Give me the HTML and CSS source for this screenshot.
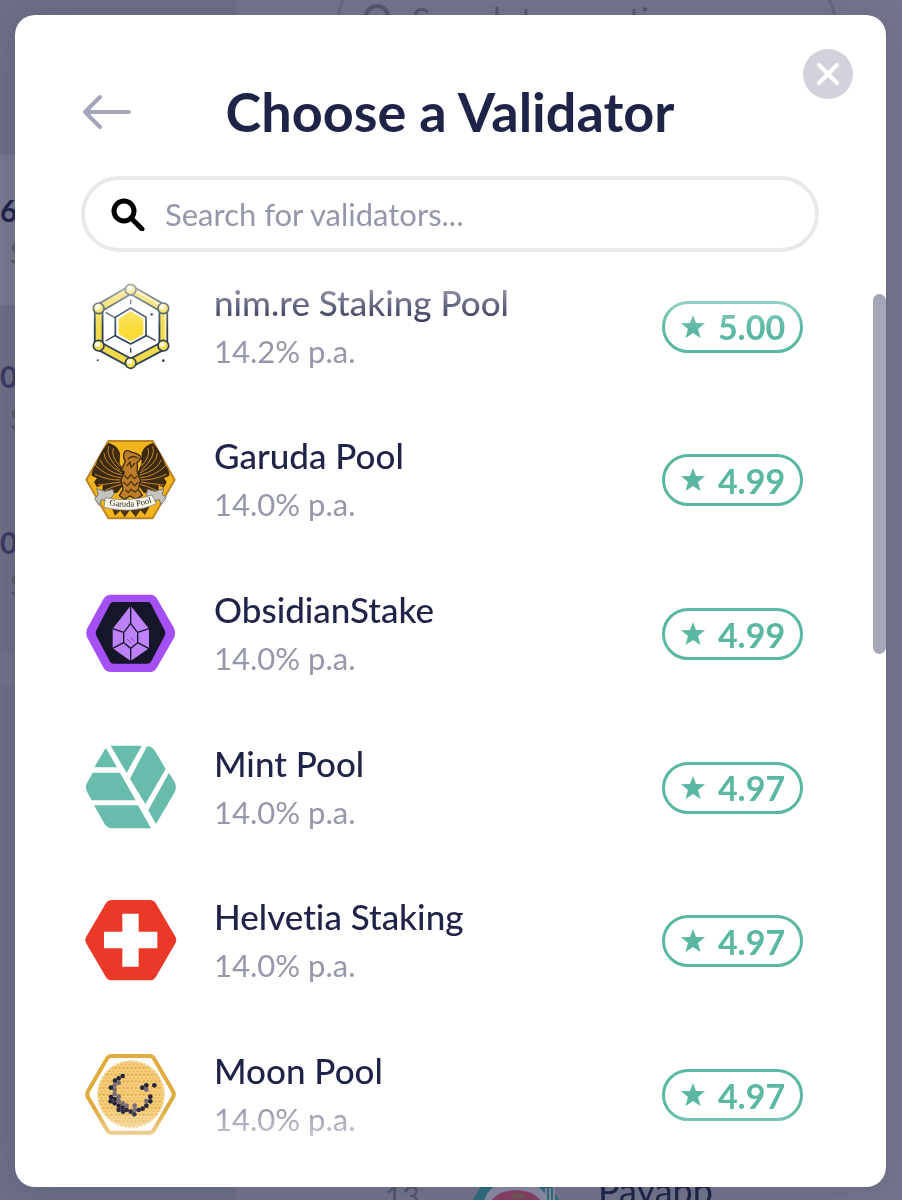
FILE: index.html
```html
<!DOCTYPE html>
<html lang="en">
<head>
    <meta charset="UTF-8">
    <meta name="viewport" content="width=device-width, initial-scale=1.0">
    <title>Choose a Validator</title>
    <link rel="stylesheet" href="styles.css">
</head>
<body>

    <!-- wallet page behind the modal -->
    <div class="page" aria-hidden="true">
        <div class="sidebar">
            <div class="account-top"></div>
            <div class="account active"><b>6</b><span>S</span></div>
            <div class="account"><b>0</b><span>S</span></div>
            <div class="account"><b>0</b><span>S</span></div>
            <div class="account-add"></div>
        </div>
        <div class="transactions">
            <div class="page-search">
                <svg width="30" height="30" viewBox="0 0 30 30"><circle cx="13" cy="13" r="11" fill="none" stroke="currentColor" stroke-width="4"/><path d="M21 21l7 7" stroke="currentColor" stroke-width="4"/></svg>
                <span>Search transactions</span>
            </div>
            <div class="transaction">
                <span class="date">13</span>
                <svg width="108" height="80" viewBox="0 0 108 80">
                    <path d="M24 0h60l24 40-24 40H24L0 40z" fill="#2f6b7d"/>
                    <ellipse cx="54" cy="26" rx="32" ry="24" fill="#8b8ca2"/>
                    <ellipse cx="54" cy="32" rx="28" ry="20" fill="#873f64"/>
                    <path d="M50 20q6-6 12 0" stroke="#6b5a50" stroke-width="4" fill="none"/>
                    <path d="M88 10v14M92 10v14M84 10v14" stroke="#8b8ca2" stroke-width="2"/>
                </svg>
                <span class="payee">Payapp</span>
            </div>
        </div>
    </div>

    <div class="overlay">
        <div class="modal" role="dialog" aria-labelledby="modal-title">
            <button class="close-button" aria-label="Close">
                <svg width="50" height="50" viewBox="0 0 50 50"><circle cx="25" cy="25" r="25" fill="#d2d2dc"/><path d="M16 16l18 18M34 16L16 34" stroke="#fff" stroke-width="4" stroke-linecap="round"/></svg>
            </button>

            <header class="modal-header">
                <button class="back-button" aria-label="Back">
                    <svg width="50" height="36" viewBox="0 0 50 36"><path d="M48 18H4M19 3L4 18l15 15" fill="none" stroke="#a5a6b8" stroke-width="4" stroke-linecap="round" stroke-linejoin="round"/></svg>
                </button>
                <h1 id="modal-title">Choose a Validator</h1>
            </header>

            <label class="search">
                <svg width="34" height="34" viewBox="0 0 34 34"><circle cx="13" cy="14" r="10" fill="none" stroke="#000" stroke-width="5"/><path d="M20 21l11 11" stroke="#000" stroke-width="5" stroke-linecap="round"/></svg>
                <input type="text" placeholder="Search for validators..." aria-label="Search for validators">
            </label>

            <ul class="validators">
                <li>
                    <svg class="icon" viewBox="46 39 270 270">
                        <g stroke="#2e4057" stroke-width="5" stroke-linejoin="round" fill="none">
                            <path d="M183 62L281 118V230L183 282L87 230V118z" stroke-width="29"/>
                            <path d="M183 62L281 118V230L183 282L87 230V118z" stroke="#f0d94a" stroke-width="18"/>
                            <path d="M183 56L287 116V234" stroke="#fff4ad" stroke-width="5"/>
                            <path d="M183 117L229 145V200L183 225L137 200V145z"/>
                            <path d="M183 127L221 149V196L183 217L147 196V149z" fill="#f9dc37" stroke="none"/>
                            <path d="M108 130L137 147M108 216L137 199M258 215L229 199M183 92v14M183 237v14" stroke-width="4"/>
                            <g fill="#f5dc48">
                                <circle cx="183" cy="62" r="16"/><circle cx="281" cy="118" r="16"/>
                                <circle cx="281" cy="230" r="16"/><circle cx="183" cy="282" r="16"/>
                                <circle cx="87" cy="230" r="16"/><circle cx="87" cy="118" r="16"/>
                            </g>
                        </g>
                        <g fill="#fffbe0">
                            <circle cx="180" cy="59" r="8"/><circle cx="278" cy="114" r="8"/><circle cx="278" cy="226" r="8"/>
                            <circle cx="180" cy="278" r="8"/><circle cx="84" cy="226" r="8"/><circle cx="84" cy="114" r="8"/>
                        </g>
                        <g fill="#2e4057"><circle cx="246" cy="136" r="4"/><circle cx="84" cy="274" r="3"/><circle cx="281" cy="275" r="4"/></g>
                    </svg>
                    <div class="info">
                        <h2>nim.re Staking Pool</h2>
                        <p>14.2% p.a.</p>
                    </div>
                    <div class="score"><svg width="26" height="26" viewBox="0 0 26 26"><path d="M13 1l3 8 9 .3-7 5.700 2.500 9L13 19l-7.500 5L8 15 1 9.300 10 9z"/></svg>5.00</div>
                </li>
                <li>
                    <svg class="icon" viewBox="46 33 270 270">
                        <path d="M116 51H249L315 167L249 283H116L50 167z" fill="#f3b51c" stroke="#bd842a" stroke-width="6"/>
                        <!-- wings -->
                        <g fill="#3c2a12">
                            <path d="M116 57C98 76 84 103 79 122C69 132 65 146 66 155L82 163L73 174L82 190L99 182L98 201L112 210L143 206L165 178L163 142L150 119L151 87C143 67 131 61 116 57z"/>
                            <path d="M250 57C268 76 281 103 286 122C296 132 300 146 299 155L283 163L291 174L282 191L267 183L267 200L251 211L222 206L202 179L204 145L215 121L216 87C222 69 236 61 250 57z"/>
                        </g>
                        <g fill="none" stroke="#c98b21" stroke-width="3">
                            <path d="M117 67Q105 96 151 139M103 87Q104 119 156 147M91 107Q103 140 157 154M79 126Q111 157 157 162M76 151Q113 169 154 168M84 183Q121 179 153 174M106 199Q131 187 155 181M131 73Q123 97 151 127"/>
                            <path d="M249 67Q261 96 215 139M263 87Q262 119 211 147M275 107Q263 140 209 154M287 126Q255 157 209 162M290 151Q253 169 211 168M282 183Q245 179 213 174M260 199Q235 187 211 181M235 73Q243 97 215 127"/>
                        </g>
                        <!-- body and head -->
                        <path d="M167 112Q157 94 166 82Q175 77 187 85Q200 86 211 95L219 108L211 105Q209 112 202 116Q205 130 202 142L212 169L206 196L218 214L200 226L181 216L164 226L149 215L160 196L154 168L164 144L155 137z" fill="#bb7d25" stroke="#3c2a12" stroke-width="4"/>
                        <path d="M174 106q15-15 31-3M171 126l10-12 3 16 12-13M164 154l10 10 10-12 10 12 9-8M161 175l12 10 11-12 11 12 10-10M167 198l9 7 8-9 12 8 8-6" fill="none" stroke="#4d3214" stroke-width="4"/>
                        <path d="M126 251l10 24 16-15 13 20 16-22 17 21 14-20 14 14 13-24z" fill="#4a3311"/>
                        <!-- banner -->
                        <path d="M81 194l25 8 23-6 5 14-19 22-20-5-6 17-14-20 11-12zM282 194l-26 8-22-6-5 16 17 20 23-5 5 15 16-22-12-8z" fill="#c4c3bd" stroke="#77746b" stroke-width="3"/>
                        <path d="M107 221Q182 236 247 213L260 240Q183 272 103 250z" fill="#f8f5e9" stroke="#77746b" stroke-width="2"/>
                        <path id="garuda-curve" d="M118 243Q187 258 255 233" fill="none"/>
                        <text class="garuda-name"><textPath href="#garuda-curve">Garuda Pool</textPath></text>
                    </svg>
                    <div class="info">
                        <h2>Garuda Pool</h2>
                        <p>14.0% p.a.</p>
                    </div>
                    <div class="score"><svg width="26" height="26" viewBox="0 0 26 26"><path d="M13 1l3 8 9 .3-7 5.700 2.500 9L13 19l-7.500 5L8 15 1 9.300 10 9z"/></svg>4.99</div>
                </li>
                <li>
                    <svg class="icon" viewBox="46 30 270 270">
                        <path d="M124 59H243Q248 59 251 64L303 154Q306 162 303 170L251 260Q248 267 241 267H124Q116 267 112 260L63 170Q60 162 63 154L112 65Q116 59 124 59z" fill="#a450f4" stroke="#a450f4" stroke-width="24" stroke-linejoin="round"/>
                        <path d="M132 69H234Q241 69 244 75L285 154Q289 162 285 170L244 248Q240 254 233 254H132Q125 254 121 248L80 170Q76 162 80 154L121 75Q125 69 132 69z" fill="#151629"/>
                        <path d="M183 80L238 149V208L183 246L129 208V149z" fill="#bd82fb"/>
                        <path d="M183 80V133M183 207V246M183 133L204 161V191L183 208L162 191V161zM129 149L162 160M238 149L204 160M162 191L129 208M204 191L238 209" fill="none" stroke="#151629" stroke-width="4"/>
                        <path d="M183 176l9 8M172 180l12 11" stroke="#572f86" stroke-width="2"/>
                    </svg>
                    <div class="info">
                        <h2>ObsidianStake</h2>
                        <p>14.0% p.a.</p>
                    </div>
                    <div class="score"><svg width="26" height="26" viewBox="0 0 26 26"><path d="M13 1l3 8 9 .3-7 5.700 2.500 9L13 19l-7.500 5L8 15 1 9.300 10 9z"/></svg>4.99</div>
                </li>
                <li>
                    <svg class="icon" viewBox="46 40 270 270">
                        <g fill="#67bcab">
                            <path d="M109 56L142 113H74L104 62Q107 57 109 56z"/>
                            <path d="M123 48H216L171 130z"/>
                            <path d="M232 50Q248 50 256 64L288 118L227 223L181 147z"/>
                            <path d="M298 129L315 158Q322 173 315 188L259 283L236 242z"/>
                            <path d="M69 129H151L198 212H66L52 186Q45 173 52 160z"/>
                            <path d="M73 227H205L244 296H127Q113 296 105 283z"/>
                        </g>
                    </svg>
                    <div class="info">
                        <h2>Mint Pool</h2>
                        <p>14.0% p.a.</p>
                    </div>
                    <div class="score"><svg width="26" height="26" viewBox="0 0 26 26"><path d="M13 1l3 8 9 .3-7 5.700 2.500 9L13 19l-7.500 5L8 15 1 9.300 10 9z"/></svg>4.97</div>
                </li>
                <li>
                    <svg class="icon" viewBox="46 36 270 270">
                        <path d="M125 48H243Q252 48 258 57L318 160Q322 168 318 176L258 280Q252 289 243 289H124Q114 289 109 280L49 177Q44 168 49 160L109 57Q115 48 125 48z" fill="#ea3829"/>
                        <path d="M158 89h49v54h56v50h-56v55h-49v-55h-55v-50h55z" fill="#fff"/>
                    </svg>
                    <div class="info">
                        <h2>Helvetia Staking</h2>
                        <p>14.0% p.a.</p>
                    </div>
                    <div class="score"><svg width="26" height="26" viewBox="0 0 26 26"><path d="M13 1l3 8 9 .3-7 5.700 2.500 9L13 19l-7.500 5L8 15 1 9.300 10 9z"/></svg>4.97</div>
                </li>
                <li>
                    <svg class="icon" viewBox="46 31 270 270">
                        <defs>
                            <pattern id="honeycomb" width="12" height="20" patternUnits="userSpaceOnUse">
                                <rect width="12" height="20" fill="#f9dfa2"/>
                                <circle cx="6" cy="5" r="5" fill="#e8b047"/>
                                <circle cx="0" cy="15" r="5" fill="#efbe5c"/>
                                <circle cx="12" cy="15" r="5" fill="#efbe5c"/>
                            </pattern>
                        </defs>
                        <path d="M124 49H242Q248 49 252 55L310 155Q315 164 310 173L252 272Q248 279 241 279H124Q117 279 113 272L55 173Q50 164 55 155L113 55Q117 49 124 49z" fill="#fff" stroke="#e0ac3e" stroke-width="12"/>
                        <circle cx="184" cy="164" r="99" fill="url(#honeycomb)" stroke="#f3d28c" stroke-width="6" stroke-dasharray="8 4"/>
                        <g fill="#776b78">
                            <circle cx="147" cy="130" r="7"/><circle cx="135" cy="137" r="7"/><circle cx="135" cy="150" r="7"/>
                            <circle cx="135" cy="163" r="7"/><circle cx="147" cy="171" r="7"/><circle cx="147" cy="184" r="7"/>
                            <circle cx="159" cy="191" r="7"/><circle cx="171" cy="198" r="7"/><circle cx="195" cy="198" r="7"/>
                            <circle cx="195" cy="211" r="7"/><circle cx="230" cy="184" r="7"/><circle cx="230" cy="150" r="7"/>
                        </g>
                        <g fill="#25243e">
                            <circle cx="159" cy="109" r="7"/><circle cx="147" cy="116" r="7"/><circle cx="136" cy="123" r="7"/>
                            <circle cx="124" cy="144" r="7"/><circle cx="124" cy="172" r="7"/><circle cx="123" cy="185" r="7"/>
                            <circle cx="135" cy="178" r="7"/><circle cx="135" cy="191" r="7"/><circle cx="147" cy="198" r="7"/>
                            <circle cx="147" cy="211" r="7"/><circle cx="159" cy="204" r="7"/><circle cx="160" cy="216" r="7"/>
                            <circle cx="171" cy="211" r="7"/><circle cx="183" cy="216" r="7"/><circle cx="194" cy="224" r="7"/>
                            <circle cx="207" cy="211" r="7"/><circle cx="219" cy="207" r="7"/><circle cx="230" cy="198" r="7"/>
                            <circle cx="242" cy="185" r="7"/><circle cx="242" cy="171" r="7"/><circle cx="218" cy="144" r="7"/>
                            <circle cx="230" cy="137" r="7"/><circle cx="254" cy="137" r="7"/>
                        </g>
                    </svg>
                    <div class="info">
                        <h2>Moon Pool</h2>
                        <p>14.0% p.a.</p>
                    </div>
                    <div class="score"><svg width="26" height="26" viewBox="0 0 26 26"><path d="M13 1l3 8 9 .3-7 5.700 2.500 9L13 19l-7.500 5L8 15 1 9.300 10 9z"/></svg>4.97</div>
                </li>
            </ul>

            <div class="scrollbar"></div>
        </div>
    </div>

</body>
</html>
```

FILE: styles.css
```css
* {
    box-sizing: border-box;
}

body {
    margin: 0;
    font-family: Lato, "Open Sans", sans-serif;
    font-variant-ligatures: none;
    color: #1f2348;
    background-color: #73758b;
}

h1, h2, p, ul {
    margin: 0;
    padding: 0;
}

button {
    padding: 0;
    border: none;
    background: none;
    cursor: pointer;
}

svg {
    display: block;
    flex-shrink: 0;
}

/* page in the background */
.page {
    position: fixed;
    inset: 0;
    display: flex;
    overflow: hidden;
}

.sidebar {
    width: 236px;
    background-color: #6d6f86;
}

.account-top {
    height: 155px;
}

.account {
    height: 166px;
    padding-top: 34px;
    color: #3a3b60;
}

.account.active {
    height: 150px;
    color: #1f2348;
    background-color: #77798e;
    margin-bottom: 16px;
}

.account b, .account span {
    display: block;
    font-size: 30px;
    line-height: 42px;
}

.account b {
    font-weight: bold;
}

.account span {
    padding-left: 10px;
    color: #57596f;
}

.account-add {
    height: 32px;
    background-color: #717388;
}

.transactions {
    flex: 1;
    display: flex;
    flex-direction: column;
    justify-content: space-between;
    padding: 0 66px 0 101px;
}

.page-search {
    display: flex;
    align-items: center;
    gap: 18px;
    height: 76px;
    margin-top: -19px;
    padding: 0 24px;
    border: 3px solid #66687f;
    border-radius: 38px;
    color: #55576e;
    font-size: 34px;
}

.transaction {
    display: flex;
    align-items: flex-start;
    height: 80px;
    margin-bottom: -58px;
    padding-left: 48px;
    font-size: 36px;
    line-height: 24px;
}

.date {
    width: 77px;
    padding-top: 6px;
    color: #535570;
    font-size: 30px;
}

.payee {
    padding-left: 28px;
}

/* modal */
.overlay {
    position: relative;
    display: flex;
    min-height: 100vh;
    padding: 15px 16px 13px 15px;
}

.modal {
    position: relative;
    flex: 1;
    display: flex;
    flex-direction: column;
    padding: 61px 67px 15px 66px;
    border-radius: 20px;
    background-color: #fff;
    box-shadow: 0 4px 36px rgba(31, 35, 72, 0.16);
}

.close-button {
    position: absolute;
    top: 34px;
    right: 33px;
}

.modal-header {
    display: grid;
    grid-template-columns: 50px 1fr 50px;
    align-items: center;
    height: 72px;
    margin-bottom: 28px;
}

h1 {
    font-size: 54px;
    line-height: 72px;
    font-weight: bold;
    text-align: center;
}

.search {
    display: flex;
    align-items: center;
    gap: 20px;
    height: 76px;
    padding: 0 26px;
    border: 4px solid #e9e9ed;
    border-radius: 38px;
}

.search input {
    flex: 1;
    min-width: 0;
    padding: 0;
    border: none;
    outline: none;
    background: none;
    font-family: inherit;
    font-size: 31px;
    color: #1f2348;
}

.search input::placeholder {
    color: #9597ab;
    opacity: 1;
}

.validators {
    flex: 1;
    display: grid;
    grid-auto-rows: 1fr;
    margin-top: -2px;
    list-style: none;
    -webkit-mask-image: linear-gradient(transparent, #000 80px, #000 calc(100% - 64px), transparent);
    mask-image: linear-gradient(transparent, #000 80px, #000 calc(100% - 64px), transparent);
}

.validators li {
    display: flex;
    align-items: center;
    padding: 0 16px 0 4px;
}

.icon {
    width: 90px;
    height: 90px;
    overflow: visible;
}

.garuda-name {
    font-family: "Liberation Serif", serif;
    font-size: 26px;
    fill: #2b2b2b;
}

.info {
    flex: 1;
    padding-left: 39px;
}

h2 {
    font-size: 35px;
    line-height: 48px;
    font-weight: 500;
}

.info p {
    font-size: 31px;
    line-height: 50px;
    color: #9597ab;
}

.score {
    display: flex;
    align-items: center;
    justify-content: center;
    gap: 12px;
    width: 141px;
    height: 52px;
    border: 3px solid #59b7a2;
    border-radius: 26px;
    color: #59b7a2;
    font-size: 34px;
    font-weight: bold;
}

.score svg {
    fill: #59b7a2;
}

.scrollbar {
    position: absolute;
    top: 279px;
    right: 0;
    width: 13px;
    height: 360px;
    border-radius: 7px;
    background-color: #a5a6b8;
}
```
